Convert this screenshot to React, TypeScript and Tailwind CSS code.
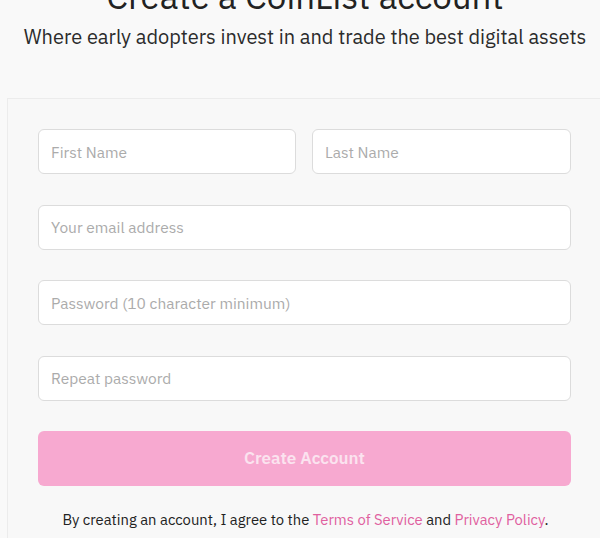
import React from "react";

const font = { fontFamily: "'IBM Plex Sans', Roboto, 'Liberation Sans', sans-serif" };

function Field({ placeholder, className = "" }: { placeholder: string; className?: string }) {
  return (
    <input
      placeholder={placeholder}
      className={`h-[45px] rounded-[6px] border border-[#dcdcdc] bg-white pl-[12px] text-[15.5px] text-[#333] placeholder:text-[#ababab] outline-none ${className}`}
    />
  );
}

export default function App() {
  return (
    <div className="w-[600px] h-[538px] overflow-hidden bg-[#f9f9f9]" style={font}>
      <div className="flex flex-col items-center pl-[10px]">
        <h1 className="mt-[-24px] text-[35px] leading-[40px] text-[#222] font-normal whitespace-nowrap">Create a CoinList account</h1>
        <p className="mt-[8px] text-[20px] leading-[26px] text-[#2b2b2b] whitespace-nowrap">
          Where early adopters invest in and trade the best digital assets
        </p>
      </div>
      <div className="ml-[7px] mt-[48px] w-[595px] border border-[#ececec] bg-[#f8f8f8] px-[30px] pt-[30px] pb-[40px]">
        <div className="flex flex-col gap-[30.5px] w-[533px]">
          <div className="flex gap-[16px]">
            <Field placeholder="First Name" className="w-[258px]" />
            <Field placeholder="Last Name" className="w-[259px]" />
          </div>
          <Field placeholder="Your email address" />
          <Field placeholder="Password (10 character minimum)" />
          <Field placeholder="Repeat password" />
          <button className="h-[55px] rounded-[6px] bg-[#f7a9d0] text-[17px] font-semibold text-[#fbe3ef]">
            Create Account
          </button>
        </div>
        <p className="mt-[23px] text-center text-[14.8px] text-[#222] pl-[2px]">
          By creating an account, I agree to the <span className="text-[#e0609f]">Terms of Service</span> and{" "}
          <span className="text-[#e0609f]">Privacy Policy</span>.
        </p>
      </div>
    </div>
  );
}
